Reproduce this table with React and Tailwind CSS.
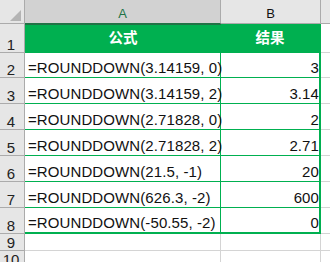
import React from "react";

const rows = [
  ["=ROUNDDOWN(3.14159, 0)", "3"],
  ["=ROUNDDOWN(3.14159, 2)", "3.14"],
  ["=ROUNDDOWN(2.71828, 0)", "2"],
  ["=ROUNDDOWN(2.71828, 2)", "2.71"],
  ["=ROUNDDOWN(21.5, -1)", "20"],
  ["=ROUNDDOWN(626.3, -2)", "600"],
  ["=ROUNDDOWN(-50.55, -2)", "0"],
];

const font = { fontFamily: '"Liberation Sans", "Noto Sans CJK SC", sans-serif' };

function RowHead({ n }) {
  return (
    <div className="bg-[#e6e6e6] border-r border-b border-[#ababab] flex items-end justify-center pr-[2px] text-[15px] leading-[14px] text-[#222]">
      {n}
    </div>
  );
}

export default function App() {
  return (
    <div
      style={font}
      className="w-[330px] h-[262px] overflow-hidden bg-white grid grid-cols-[25px_196px_100px_1fr] grid-rows-[24px_29px_25px_26px_26px_26px_26px_26px_26px_17px_1fr]"
    >
      {/* header row */}
      <div className="bg-[#e6e6e6] border-r border-b border-[#ababab] flex items-end justify-end pr-[3px] pb-[2px]">
        <svg width="11" height="11" viewBox="0 0 11 11">
          <polygon points="11,0 11,11 0,11" fill="#b4b4b4" />
        </svg>
      </div>
      <div className="bg-[#d2d2d2] border-r border-[#ababab] border-b border-b-[#217346] flex items-end justify-center pb-[2px] text-[13px] leading-[15px] text-[#217346]">
        A
      </div>
      <div className="bg-[#e6e6e6] border-r border-b border-[#ababab] flex items-end justify-center pb-[2px] text-[13px] leading-[15px] text-[#111]">
        B
      </div>
      <div className="bg-[#e6e6e6] border-b border-[#ababab]"></div>

      {/* row 1 */}
      <RowHead n={1} />
      <div className="bg-[#00b050] border-t border-[#217346] flex items-center justify-center text-white font-bold text-[14.5px]">
        公式
      </div>
      <div className="bg-[#00b050] border-r-2 border-[#00b050] flex items-center justify-center text-white font-bold text-[14.5px]">
        结果
      </div>
      <div className="border-b border-[#d4d4d4]"></div>

      {rows.map(([f, v], i) => {
        const last = i === rows.length - 1;
        return (
          <React.Fragment key={i}>
            <RowHead n={i + 2} />
            <div
              className={
                "border-r border-[#00b050] flex items-end pl-[3px] pb-[1px] text-[15px] leading-[17px] tracking-[0.1px] text-[#111] whitespace-nowrap " +
                (last ? "border-b-2" : "border-b")
              }
            >
              {f}
            </div>
            <div
              className={
                "border-r-2 border-[#00b050] flex items-end justify-end pb-[1px] text-[15px] leading-[17px] tracking-[0.1px] text-[#111] " +
                (last ? "border-b-2" : "border-b")
              }
            >
              {v}
            </div>
            <div className="border-b border-[#d4d4d4]"></div>
          </React.Fragment>
        );
      })}

      {/* row 9 */}
      <RowHead n={9} />
      <div className="border-r border-b border-[#d4d4d4]"></div>
      <div className="border-r border-b border-[#d4d4d4]"></div>
      <div className="border-b border-[#d4d4d4]"></div>

      {/* row 10 */}
      <div className="bg-[#e6e6e6] border-r border-[#ababab] flex items-start justify-center pr-[2px] pt-[2px] text-[15px] leading-[14px] text-[#222]">
        10
      </div>
      <div className="border-r border-[#d4d4d4]"></div>
      <div className="border-r border-[#d4d4d4]"></div>
      <div></div>
    </div>
  );
}
